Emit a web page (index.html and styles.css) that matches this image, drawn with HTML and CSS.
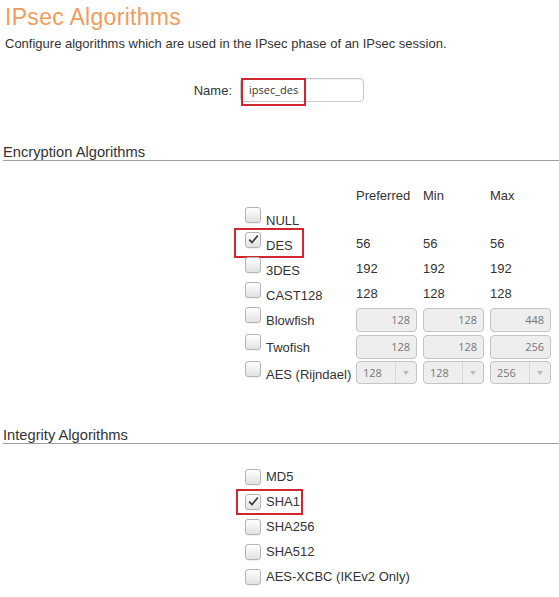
FILE: index.html
```html
<!DOCTYPE html>
<html>
<head>
<meta charset="utf-8">
<link rel="stylesheet" href="styles.css">
</head>
<body>
<h1 class="title">IPsec Algorithms</h1>
<p class="desc">Configure algorithms which are used in the IPsec phase of an IPsec session.</p>

<div class="name-row">
  <label class="name-label">Name:</label>
  <div class="name-field">
    <div class="text-input">ipsec_des</div>
    <div class="mark mark-name"></div>
  </div>
</div>

<h2 class="section">Encryption Algorithms</h2>
<div class="enc">
  <div class="enc-row head">
    <span></span><span></span>
    <span class="col">Preferred</span><span class="col">Min</span><span class="col">Max</span>
  </div>
  <div class="enc-row">
    <span class="cb"></span><span class="lbl">NULL</span>
    <span></span><span></span><span></span>
  </div>
  <div class="enc-row marked">
    <span class="cb checked"><svg viewBox="0 0 15 15"><path d="M3.2 7.6 L6 10.6 L11.8 3.6"/></svg></span><span class="lbl">DES</span>
    <span class="val">56</span><span class="val">56</span><span class="val">56</span>
    <div class="mark mark-des"></div>
  </div>
  <div class="enc-row">
    <span class="cb"></span><span class="lbl">3DES</span>
    <span class="val">192</span><span class="val">192</span><span class="val">192</span>
  </div>
  <div class="enc-row">
    <span class="cb"></span><span class="lbl">CAST128</span>
    <span class="val">128</span><span class="val">128</span><span class="val">128</span>
  </div>
  <div class="enc-row tall">
    <span class="cb"></span><span class="lbl">Blowfish</span>
    <span class="box num">128</span><span class="box num">128</span><span class="box num">448</span>
  </div>
  <div class="enc-row tall">
    <span class="cb"></span><span class="lbl">Twofish</span>
    <span class="box num">128</span><span class="box num">128</span><span class="box num">256</span>
  </div>
  <div class="enc-row">
    <span class="cb"></span><span class="lbl">AES (Rijndael)</span>
    <span class="box sel"><span class="sel-v">128</span><span class="caret"></span></span>
    <span class="box sel"><span class="sel-v">128</span><span class="caret"></span></span>
    <span class="box sel"><span class="sel-v">256</span><span class="caret"></span></span>
  </div>
</div>

<h2 class="section section-int">Integrity Algorithms</h2>
<div class="integ">
  <div class="int-row"><span class="cb"></span><span class="ilbl">MD5</span></div>
  <div class="int-row marked">
    <span class="cb checked"><svg viewBox="0 0 15 15"><path d="M3.2 7.6 L6 10.6 L11.8 3.6"/></svg></span><span class="ilbl">SHA1</span>
    <div class="mark mark-sha"></div>
  </div>
  <div class="int-row"><span class="cb"></span><span class="ilbl">SHA256</span></div>
  <div class="int-row"><span class="cb"></span><span class="ilbl">SHA512</span></div>
  <div class="int-row"><span class="cb"></span><span class="ilbl">AES-XCBC (IKEv2 Only)</span></div>
</div>
</body>
</html>
```

FILE: styles.css
```css
html, body {
  margin: 0;
  padding: 0;
  background: #fff;
}
body {
  font-family: "Liberation Sans", Arial, sans-serif;
  color: #333;
  width: 559px;
  overflow: hidden;
}
.title {
  margin: 4px 0 0 5px;
  font-size: 23px;
  line-height: 26px;
  font-weight: normal;
  color: #ef9c5c;
  letter-spacing: 0.3px;
}
.desc {
  margin: 6px 0 0 5px;
  font-size: 13px;
  line-height: 16px;
  color: #333;
}
.name-row {
  display: flex;
  align-items: center;
  margin-top: 26px;
  height: 24px;
}
.name-label {
  width: 232px;
  text-align: right;
  font-size: 13px;
  color: #333;
  margin-right: 8px;
}
.name-field {
  position: relative;
}
.text-input {
  box-sizing: border-box;
  width: 124px;
  height: 24px;
  border: 1px solid #c8c8c8;
  border-radius: 4px;
  padding-left: 8px;
  font-family: "Open Sans", sans-serif;
  font-size: 11px;
  line-height: 22px;
  color: #333;
  box-shadow: inset 0 1px 1px rgba(0,0,0,0.06);
}
.mark {
  position: absolute;
  border: 2px solid #d0282e;
  box-sizing: border-box;
}
.mark-name {
  left: 1px;
  top: 0;
  width: 65px;
  height: 28px;
}
.section {
  margin: 42px 0 0 3px;
  font-size: 14.7px;
  line-height: 16px;
  font-weight: normal;
  color: #333;
  border-bottom: 1px solid #a0a0a0;
}
.section-int {
  margin-top: 42px;
}
.enc {
  margin-top: 24px;
  padding-left: 245px;
  font-size: 13px;
}
.enc-row {
  display: grid;
  grid-template-columns: 21px 90px 67px 67px 67px;
  align-items: center;
  height: 25px;
  position: relative;
}
.enc-row.head {
  height: 21px;
}
.enc-row.tall {
  height: 27px;
}
.col, .val {
  color: #333;
  line-height: 15px;
}
.cb {
  box-sizing: border-box;
  width: 16px;
  height: 16px;
  border: 1px solid #b4b4b4;
  border-radius: 3px;
  background: linear-gradient(#ffffff, #e2e2e2);
  box-shadow: 0 1px 0 rgba(0,0,0,0.05);
  display: block;
  position: relative;
}
.enc-row .cb {
  align-self: start;
  margin-top: 1px;
}
.cb svg {
  position: absolute;
  left: 0;
  top: -1px;
  width: 15px;
  height: 15px;
}
.cb svg path {
  fill: none;
  stroke: #333;
  stroke-width: 1.6;
}
.lbl {
  align-self: start;
  margin-top: 7px;
  line-height: 15px;
  white-space: nowrap;
  color: #333;
}
.box {
  box-sizing: border-box;
  width: 61px;
  height: 24px;
  border: 1px solid #c4c4c4;
  border-radius: 4px;
  background: #eeeeee;
  font-family: "Open Sans", sans-serif;
  font-size: 11px;
  color: #777;
}
.box.num {
  text-align: right;
  padding-right: 6px;
  line-height: 22px;
}
.box.sel {
  display: flex;
  align-items: stretch;
  height: 23px;
}
.sel-v {
  flex: 1;
  padding-left: 6px;
  line-height: 21px;
  border-right: 1px solid #d8d8d8;
}
.caret {
  width: 20px;
  position: relative;
}
.caret::after {
  content: "";
  position: absolute;
  left: 7px;
  top: 9px;
  border-left: 3.5px solid transparent;
  border-right: 3.5px solid transparent;
  border-top: 4px solid #bbb;
}
.mark-des {
  left: -11px;
  top: -3px;
  width: 70px;
  height: 30px;
}
.integ {
  margin-top: 20px;
  padding-left: 245px;
  font-size: 13px;
}
.int-row {
  display: flex;
  align-items: center;
  height: 25px;
  position: relative;
}
.int-row .cb {
  margin-right: 5px;
}
.ilbl {
  line-height: 15px;
  color: #333;
  white-space: nowrap;
}
.mark-sha {
  left: -9px;
  top: 0;
  width: 67px;
  height: 26px;
}
```
